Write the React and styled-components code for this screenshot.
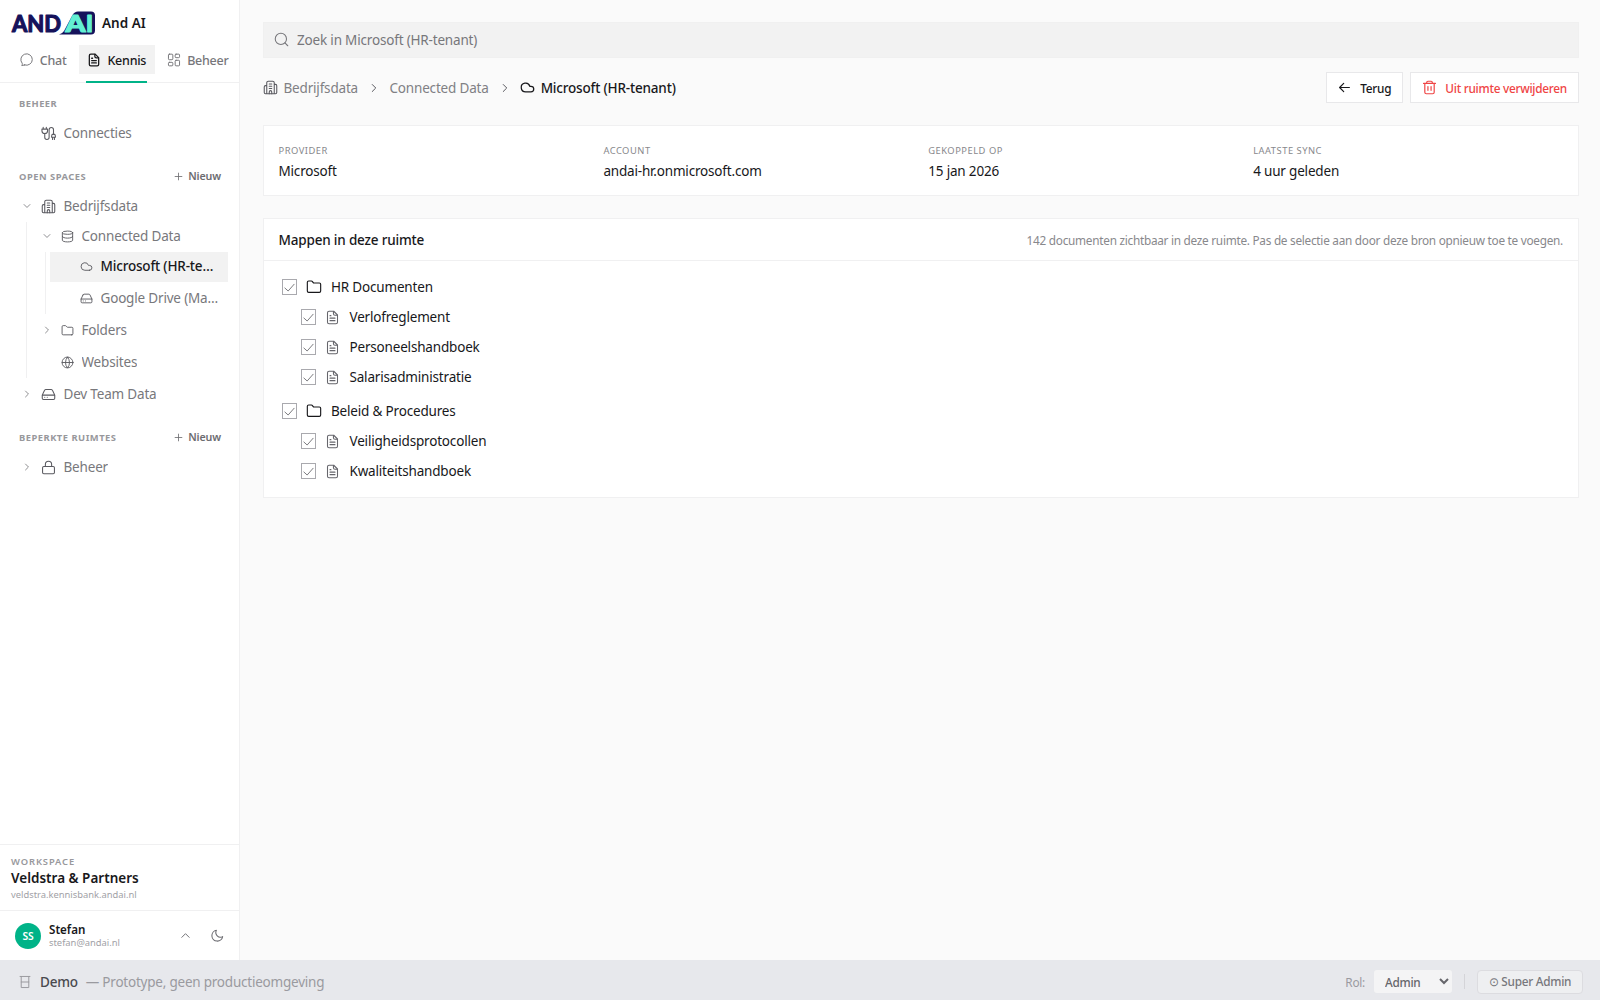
import React from 'react'
import styled, { createGlobalStyle } from 'styled-components'

const GlobalStyle = createGlobalStyle`
    * {
        box-sizing: border-box;
    }
    body {
        margin: 0;
        background: #fafafa;
        color: #18181b;
        font-family: 'Noto Sans', sans-serif;
        font-size: 13.5px;
        letter-spacing: -0.18px;
    }
    button, select {
        font-family: inherit;
        letter-spacing: inherit;
    }
`

// Outline icons, all on a 24 x 24 grid
const icons = {
    chat: <path d='M8 20.5 L3 21.5 C3.9 20.3 4.2 19 3.8 17.6 A9.8 9.8 0 1 1 8 20.5 Z' />,
    file: <>
        <path d='M14 2 H6.5 A2.5 2.5 0 0 0 4 4.5 V19.5 A2.5 2.5 0 0 0 6.5 22 H17.5 A2.5 2.5 0 0 0 20 19.5 V8 Z' />
        <path d='M13.5 2.5 V6 A2.5 2.5 0 0 0 16 8.5 H19.5 M8 17 H16 M8 13 H16 M8 9 H9.5' />
    </>,
    dashboard: <>
        <rect x='2.5' y='2' width='7.5' height='9.5' rx='1.5' />
        <rect x='14' y='2' width='7.5' height='6' rx='1.5' />
        <rect x='2.5' y='16' width='7.5' height='6' rx='1.5' />
        <rect x='14' y='12.5' width='7.5' height='9.5' rx='1.5' />
    </>,
    plug: <>
        <path d='M3.5 2 V5 M8.5 2 V5 M1.5 5 H10.5 V7.5 A4.5 4.5 0 0 1 1.5 7.5 Z M6 12 V18 A3.5 3.5 0 0 0 13 18 V6 A3.5 3.5 0 0 1 20 6 V13' />
        <path d='M17 18 V16 A3 3 0 0 1 23 16 V18 Z M18.5 18 V21.5 M21.5 18 V21.5' />
    </>,
    building: <>
        <path d='M6 22 V4.5 A2.5 2.5 0 0 1 8.5 2 H15.5 A2.5 2.5 0 0 1 18 4.5 V22 M6 9 H4 A2 2 0 0 0 2 11 V20 A2 2 0 0 0 4 22 H20 A2 2 0 0 0 22 20 V9 A2 2 0 0 0 20 7 H18' />
        <path d='M10 6.5 H14 M10 10 H14 M10 13.5 H14 M10 22 V19 A2 2 0 0 1 14 19 V22' />
    </>,
    database: <>
        <ellipse cx='12' cy='5' rx='9.5' ry='3' />
        <path d='M2.5 5 V19 C2.5 20.7 6.8 22 12 22 S21.5 20.7 21.5 19 V5 M2.5 12 C2.5 13.7 6.8 15 12 15 S21.5 13.7 21.5 12' />
    </>,
    cloud: <path d='M17.5 19 H9 A7 7 0 1 1 15.7 10 H17.5 A4.5 4.5 0 1 1 17.5 19 Z' />,
    drive: <>
        <path d='M22 13 H2 M5.5 5.5 L2 13 V18 A2 2 0 0 0 4 20 H20 A2 2 0 0 0 22 18 V13 L18.5 5.5 A2.5 2.5 0 0 0 16.5 4 H7.5 A2.5 2.5 0 0 0 5.5 5.5 Z' />
        <path d='M6 16.5 H6.01 M10 16.5 H10.01' />
    </>,
    folder: <path d='M20 20 H4 A2 2 0 0 1 2 18 V5 A2 2 0 0 1 4 3 H8 A2 2 0 0 1 9.7 3.9 L10.5 5.1 A2 2 0 0 0 12.2 6 H20 A2 2 0 0 1 22 8 V18 A2 2 0 0 1 20 20 Z' />,
    globe: <>
        <circle cx='12' cy='12' r='10' />
        <path d='M2 12 H22 M12 2 A15 15 0 0 0 12 22 A15 15 0 0 0 12 2' />
    </>,
    lock: <>
        <rect x='2.5' y='10.5' width='19' height='11.5' rx='2' />
        <path d='M7 10.5 V7 A5 5 0 0 1 17 7 V10.5' />
    </>,
    search: <>
        <circle cx='11' cy='11' r='9' />
        <path d='M17.5 17.5 L22 22' />
    </>,
    arrowLeft: <path d='M21 12 H3 M10.5 4.5 L3 12 L10.5 19.5' />,
    trash: <>
        <path d='M2.5 5.5 H21.5 M4.5 5.5 V19.5 A2.5 2.5 0 0 0 7 22 H17 A2.5 2.5 0 0 0 19.5 19.5 V5.5 M7.5 5.5 V4 A2 2 0 0 1 9.5 2 H14.5 A2 2 0 0 1 16.5 4 V5.5' />
        <path d='M9.5 10.5 V16.5 M14.5 10.5 V16.5' />
    </>,
    moon: <path d='M21.5 14 A8.5 8.5 0 0 1 10 2.5 A10 10 0 1 0 21.5 14 Z' />,
    down: <path d='M5 8.5 L12 15.5 L19 8.5' />,
    right: <path d='M8.5 5 L15.5 12 L8.5 19' />,
    up: <path d='M4 16 L12 8 L20 16' />,
    plus: <path d='M12 3 V21 M3 12 H21' />,
    check: <path d='M3.5 13 L9.5 18.5 L20.5 6' />,
    demo: <path d='M3.5 2.5 H20.5 M5.5 2.5 V21.5 H18.5 V2.5 M5.5 12 H18.5' />,
}

const Svg = styled.svg`
    flex: none;
    display: block;
    fill: none;
    stroke: currentColor;
    stroke-width: ${props => props.$stroke};
    stroke-linecap: round;
    stroke-linejoin: round;
    color: ${props => props.$color || 'inherit'};
`

function Icon({ name, size = 15, stroke = 1.7, color }) {
    return (
        <Svg viewBox='0 0 24 24' width={size} height={size} $stroke={stroke} $color={color}>
            {icons[name]}
        </Svg>
    )
}

const Page = styled.div`
    display: flex;
    flex-direction: column;
    height: 1000px;
`

const Body = styled.div`
    display: flex;
    flex: 1;
    min-height: 0;
`

// Sidebar
const Sidebar = styled.aside`
    display: flex;
    flex-direction: column;
    flex: none;
    width: 240px;
    background: #fff;
    border-right: 1px solid #f0f0f1;
`

const Brand = styled.div`
    display: flex;
    align-items: center;
    gap: 7px;
    height: 45px;
    padding-left: 11px;
    font-weight: 600;
    letter-spacing: 0;
`

const Tabs = styled.nav`
    display: flex;
    height: 38px;
    padding-left: 11px;
    gap: 3.5px;
    border-bottom: 1px solid #f0f0f1;
`

const Tab = styled.div`
    position: relative;
    display: flex;
    align-items: center;
    gap: 6px;
    height: 29px;
    padding: 1px 8.75px 0;
    font-size: 12.5px;
    letter-spacing: -0.25px;
    font-weight: 500;
    color: ${props => props.$active ? '#18181b' : '#77777b'};
    background: ${props => props.$active ? '#f2f2f2' : 'transparent'};
    &::after {
        content: '';
        display: ${props => props.$active ? 'block' : 'none'};
        position: absolute;
        left: 7.5px;
        right: 7.5px;
        bottom: -9px;
        height: 2px;
        background: #00b388;
    }
`

const Nav = styled.div`
    flex: 1;
    padding: 9.5px 11px 0;
`

const SectionHead = styled.div`
    display: flex;
    align-items: center;
    justify-content: space-between;
    height: 22px;
    margin-top: ${props => props.$top || 0}px;
    margin-bottom: 4px;
    padding: 0 7px 0 8px;
    font-size: 9.375px;
    font-weight: 700;
    letter-spacing: 0.5px;
    color: #98989c;
`

const NewButton = styled.span`
    display: flex;
    align-items: center;
    gap: 5px;
    padding-bottom: 1px;
    font-size: 10.7px;
    font-weight: 600;
    letter-spacing: -0.15px;
    color: #6c6c70;
`

const Row = styled.div`
    display: flex;
    align-items: center;
    height: 30px;
    padding: 0 8px 1px 9px;
    color: ${props => props.$active ? '#18181b' : '#78787c'};
    background: ${props => props.$active ? '#f2f2f2' : 'transparent'};
    font-weight: ${props => props.$active ? 500 : 400};
`

const Toggle = styled.span`
    display: flex;
    flex: none;
    width: 21px;
    padding-left: 2px;
`

const RowIcon = styled.span`
    display: flex;
    flex: none;
    width: ${props => props.$small ? 20.5 : 22.5}px;
    color: #5a5a60;
`

const RowLabel = styled.span`
    overflow: hidden;
    text-overflow: ellipsis;
    white-space: nowrap;
`

const List = styled.div`
    display: flex;
    flex-direction: column;
    gap: 2px;
`

const Children = styled(List)`
    margin-left: ${props => props.$indent}px;
    padding-left: 4px;
    border-left: 1px solid #f0f0f1;
`

const Workspace = styled.div`
    display: flex;
    flex-direction: column;
    height: 66px;
    padding: 10px 11px 0;
    border-top: 1px solid #f0f0f1;
    small {
        font-size: 9.375px;
        letter-spacing: 0;
        line-height: 14px;
        color: #a1a1a6;
    }
    b {
        font-size: 13.5px;
        font-weight: 600;
        line-height: 19px;
        letter-spacing: 0;
    }
    span {
        font-size: 9.375px;
        font-weight: 600;
        letter-spacing: 0.9px;
        line-height: 14px;
        color: #98989c;
    }
`

const User = styled.div`
    display: flex;
    align-items: center;
    height: 50px;
    padding: 0 15px;
    border-top: 1px solid #f0f0f1;
    color: #66666b;
`

const Avatar = styled.div`
    width: 26px;
    height: 26px;
    border-radius: 50%;
    background: #00b388;
    color: #fff;
    font-size: 10.3px;
    font-weight: 600;
    line-height: 26px;
    text-align: center;
`

const UserText = styled.div`
    display: flex;
    flex-direction: column;
    flex: 1;
    margin-left: 8px;
    b {
        font-size: 11.6px;
        font-weight: 600;
        line-height: 13px;
        letter-spacing: 0;
        color: #18181b;
    }
    small {
        font-size: 9.375px;
        letter-spacing: 0;
        line-height: 13px;
        color: #a1a1a6;
    }
`

const UserIcons = styled.div`
    display: flex;
    align-items: center;
    gap: 20px;
`

// Content
const Main = styled.main`
    display: flex;
    flex-direction: column;
    flex: 1;
    padding: 22px 21px 0 22.5px;
`

const Search = styled.div`
    display: flex;
    align-items: center;
    gap: 8px;
    height: 36px;
    padding: 0 0 1px 10.5px;
    background: #f2f2f2;
    border: 1px solid #f0f0f0;
    color: #77777b;
`

const Toolbar = styled.div`
    display: flex;
    align-items: center;
    height: 31px;
    margin: 14px 0 22px;
`

const Crumb = styled.span`
    display: flex;
    align-items: center;
    gap: ${props => props.$active ? 5.5 : 6}px;
    color: ${props => props.$active ? '#18181b' : '#808084'};
    font-weight: ${props => props.$active ? 500 : 400};
`

const Separator = styled.span`
    margin: 0 9.5px 0 10px;
    color: #5a5a60;
`

const Actions = styled.div`
    display: flex;
    gap: 7px;
    margin-left: auto;
`

const Button = styled.button`
    display: flex;
    align-items: center;
    gap: ${props => props.$danger ? 8 : 9}px;
    height: 31px;
    padding: 0 11px;
    background: #fff;
    border: 1px solid #e8e8ea;
    font-size: 11.8px;
    letter-spacing: -0.26px;
    font-weight: 500;
    color: ${props => props.$danger ? '#ef4444' : '#18181b'};
`

const Card = styled.section`
    background: #fff;
    border: 1px solid #f0f0f1;
    margin-bottom: 22px;
`

const Stats = styled.div`
    display: grid;
    grid-template-columns: repeat(4, 1fr);
    gap: 15px;
    height: 69px;
    padding: 17px 15px 0;
`

const Stat = styled.div`
    display: flex;
    flex-direction: column;
    small {
        font-size: 9.375px;
        letter-spacing: 0.5px;
        line-height: 15px;
        color: #88888c;
    }
    span {
        line-height: 27px;
    }
`

const CardHead = styled.div`
    display: flex;
    align-items: center;
    justify-content: space-between;
    height: 42px;
    padding: 0 15px;
    border-bottom: 1px solid #f0f0f1;
    font-weight: 500;
    small {
        font-size: 11.8px;
        letter-spacing: -0.27px;
        font-weight: 400;
        color: #88888c;
    }
`

const Folders = styled.div`
    display: flex;
    flex-direction: column;
    gap: 4px;
    padding: 11px 18.5px;
`

const FolderRow = styled.div`
    display: flex;
    align-items: center;
    height: 30px;
    padding-left: ${props => props.$nested ? 18.5 : 0}px;
`

const Checkbox = styled.span`
    display: flex;
    align-items: center;
    justify-content: center;
    width: 15px;
    height: 16px;
    border: 1px solid #a9a9ae;
    color: #707075;
    margin-right: 9px;
`

const FolderIcon = styled.span`
    width: 25px;
`

// Demo bar
const Footer = styled.footer`
    display: flex;
    align-items: center;
    height: 40px;
    padding: 3px 17px 0 18px;
    background: #e7e8ec;
    color: #9a9a9f;
    letter-spacing: -0.22px;
    b {
        margin: 0 8px;
        font-weight: 500;
        color: #4a4a4f;
    }
`

const Role = styled.div`
    display: flex;
    align-items: center;
    margin-left: auto;
    font-size: 11.8px;
    letter-spacing: -0.26px;
`

const Select = styled.select`
    width: 78px;
    height: 23px;
    margin-left: 9px;
    padding: 0 7px;
    border: 0;
    border-radius: 3px;
    background: #f4f4f5;
    font-size: 11.8px;
    font-weight: 500;
    color: #66666b;
`

const Divider = styled.span`
    width: 1px;
    height: 15px;
    margin: 0 12px;
    background: #d4d4d8;
`

const RoleButton = styled.button`
    width: 106px;
    height: 24px;
    padding: 0 0 1px;
    border: 1px solid #dcdce0;
    border-radius: 4px;
    background: #eeeff1;
    font-size: 11.8px;
    font-weight: 500;
    color: #77777c;
`

const LogoText = styled.text`
    font-family: Lato, sans-serif;
    font-size: 23px;
    font-weight: ${props => props.$mint ? 900 : 700};
    letter-spacing: 0;
    fill: ${props => props.$mint ? '#63f0d3' : '#15125b'};
    stroke: ${props => props.$mint ? '#63f0d3' : '#15125b'};
    stroke-width: 1.2;
    stroke-linejoin: round;
`

function Logo() {
    return (
        <svg width='84' height='34' viewBox='0 0 84 34'>
            <path d='M48 28.5 Q51 28 53 25 L61.5 9 Q63.5 5.5 67 5.5 H80 Q84 5.5 84 9.5 V24.5 Q84 28.5 80 28.5 Z' fill='#15125b' />
            <LogoText x='1' y='25.5' textLength='49' lengthAdjust='spacingAndGlyphs'>AND</LogoText>
            <LogoText $mint x='54.5' y='25.5' textLength='20' lengthAdjust='spacingAndGlyphs'>A</LogoText>
            <LogoText $mint x='75' y='25.5'>I</LogoText>
        </svg>
    )
}

function TreeRow({ icon, label, toggle, small, active }) {
    return (
        <Row $active={active}>
            <Toggle>{toggle && <Icon name={toggle} size={10} stroke={2} />}</Toggle>
            <RowIcon $small={small}><Icon name={icon} size={small ? 13 : 15} /></RowIcon>
            <RowLabel>{label}</RowLabel>
        </Row>
    )
}

const folders = [
    { name: 'HR Documenten', files: ['Verlofreglement', 'Personeelshandboek', 'Salarisadministratie'] },
    { name: 'Beleid & Procedures', files: ['Veiligheidsprotocollen', 'Kwaliteitshandboek'] },
]

const stats = [
    ['PROVIDER', 'Microsoft'],
    ['ACCOUNT', 'andai-hr.onmicrosoft.com'],
    ['GEKOPPELD OP', '15 jan 2026'],
    ['LAATSTE SYNC', '4 uur geleden'],
]

function FolderItem({ name, nested }) {
    return (
        <FolderRow $nested={nested}>
            <Checkbox><Icon name='check' size={13} /></Checkbox>
            <FolderIcon>
                <Icon name={nested ? 'file' : 'folder'} size={nested ? 15 : 16} color={nested ? '#65656b' : '#18181b'} />
            </FolderIcon>
            {name}
        </FolderRow>
    )
}

export default function App() {
    return (
        <Page>
            <GlobalStyle />
            <Body>
                <Sidebar>
                    <Brand><Logo />And AI</Brand>
                    <Tabs>
                        <Tab><Icon name='chat' size={14} />Chat</Tab>
                        <Tab $active><Icon name='file' size={14} stroke={2.2} />Kennis</Tab>
                        <Tab><Icon name='dashboard' size={14} />Beheer</Tab>
                    </Tabs>
                    <Nav>
                        <SectionHead>BEHEER</SectionHead>
                        <TreeRow icon='plug' label='Connecties' />
                        <SectionHead $top={17}>
                            OPEN SPACES
                            <NewButton><Icon name='plus' size={9} stroke={2.2} />Nieuw</NewButton>
                        </SectionHead>
                        <List>
                            <div>
                                <TreeRow icon='building' label='Bedrijfsdata' toggle='down' />
                                <Children $indent={15}>
                                    <div>
                                        <TreeRow small icon='database' label='Connected Data' toggle='down' />
                                        <Children $indent={14}>
                                            <TreeRow small active icon='cloud' label='Microsoft (HR-tenant)' />
                                            <TreeRow small icon='drive' label='Google Drive (Marketing)' />
                                        </Children>
                                    </div>
                                    <TreeRow small icon='folder' label='Folders' toggle='right' />
                                    <TreeRow small icon='globe' label='Websites' />
                                </Children>
                            </div>
                            <TreeRow icon='drive' label='Dev Team Data' toggle='right' />
                        </List>
                        <SectionHead $top={17}>
                            BEPERKTE RUIMTES
                            <NewButton><Icon name='plus' size={9} stroke={2.2} />Nieuw</NewButton>
                        </SectionHead>
                        <TreeRow icon='lock' label='Beheer' toggle='right' />
                    </Nav>
                    <Workspace>
                        <span>WORKSPACE</span>
                        <b>Veldstra & Partners</b>
                        <small>veldstra.kennisbank.andai.nl</small>
                    </Workspace>
                    <User>
                        <Avatar>SS</Avatar>
                        <UserText>
                            <b>Stefan</b>
                            <small>stefan@andai.nl</small>
                        </UserText>
                        <UserIcons>
                            <Icon name='up' size={11} stroke={2} />
                            <Icon name='moon' size={13} stroke={1.9} />
                        </UserIcons>
                    </User>
                </Sidebar>
                <Main>
                    <Search><Icon name='search' />Zoek in Microsoft (HR-tenant)</Search>
                    <Toolbar>
                        <Crumb><Icon name='building' color='#5a5a60' />Bedrijfsdata</Crumb>
                        <Separator><Icon name='right' size={12} stroke={2} /></Separator>
                        <Crumb>Connected Data</Crumb>
                        <Separator><Icon name='right' size={12} stroke={2} /></Separator>
                        <Crumb $active><Icon name='cloud' stroke={2} />Microsoft (HR-tenant)</Crumb>
                        <Actions>
                            <Button><Icon name='arrowLeft' size={13} stroke={2.2} />Terug</Button>
                            <Button $danger><Icon name='trash' stroke={1.9} />Uit ruimte verwijderen</Button>
                        </Actions>
                    </Toolbar>
                    <Card>
                        <Stats>
                            {stats.map(([label, value]) => (
                                <Stat key={label}>
                                    <small>{label}</small>
                                    <span>{value}</span>
                                </Stat>
                            ))}
                        </Stats>
                    </Card>
                    <Card>
                        <CardHead>
                            Mappen in deze ruimte
                            <small>142 documenten zichtbaar in deze ruimte. Pas de selectie aan door deze bron opnieuw toe te voegen.</small>
                        </CardHead>
                        <Folders>
                            {folders.map(folder => (
                                <div key={folder.name}>
                                    <FolderItem name={folder.name} />
                                    {folder.files.map(file => <FolderItem key={file} name={file} nested />)}
                                </div>
                            ))}
                        </Folders>
                    </Card>
                </Main>
            </Body>
            <Footer>
                <Icon name='demo' size={14} />
                <b>Demo</b>
                — Prototype, geen productieomgeving
                <Role>
                    Rol:
                    <Select defaultValue='Admin'><option>Admin</option></Select>
                    <Divider />
                    <RoleButton>⊙ Super Admin</RoleButton>
                </Role>
            </Footer>
        </Page>
    )
}
